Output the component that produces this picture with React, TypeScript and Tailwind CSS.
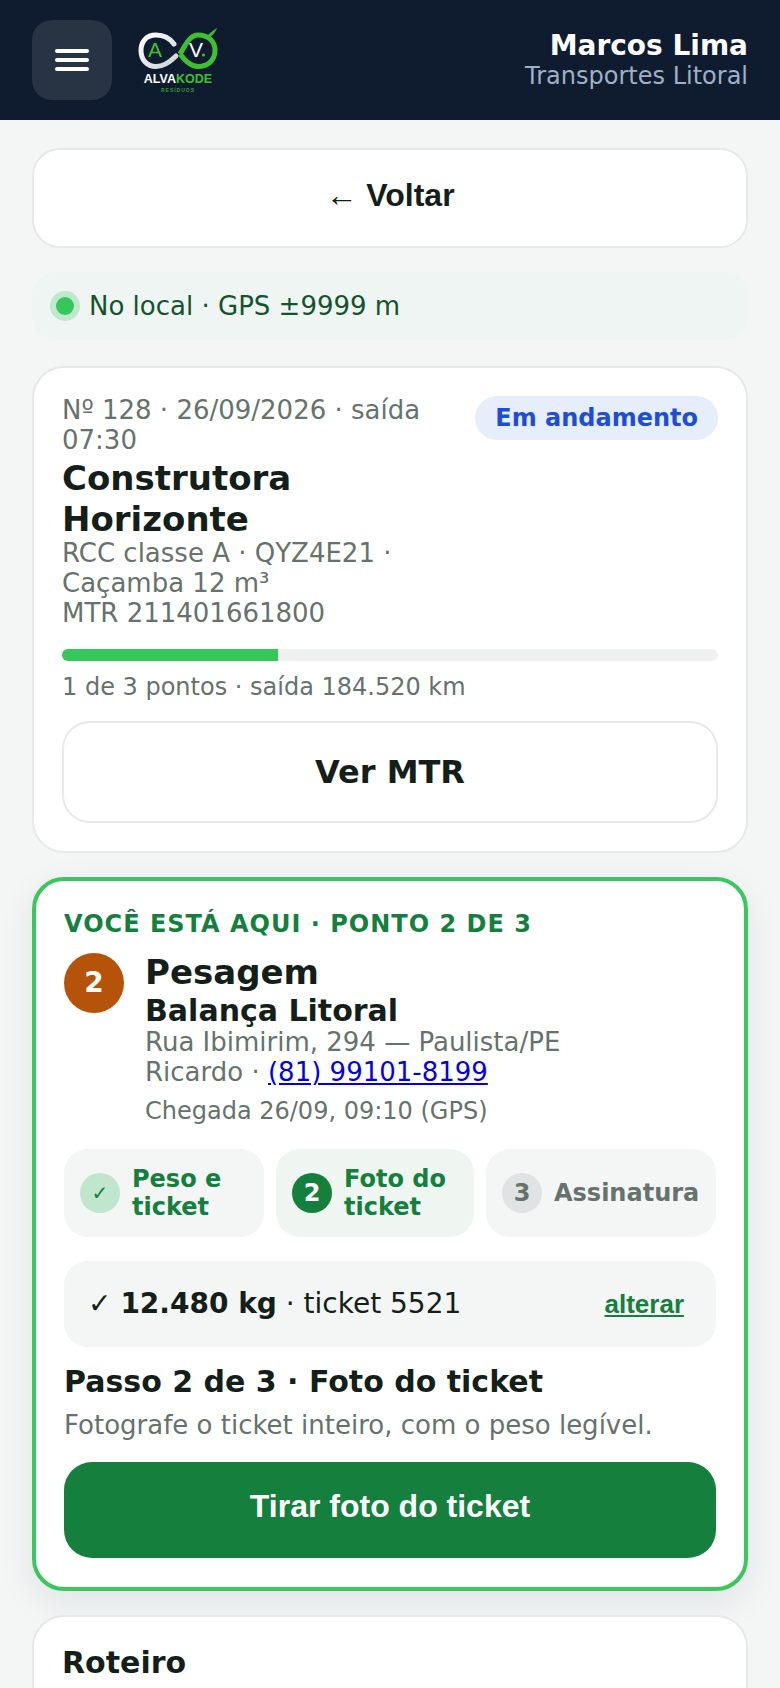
import React from "react";

function MenuIcon() {
  return (
    <svg width="34" height="24" viewBox="0 0 34 24" fill="none" stroke="white" strokeWidth="4" strokeLinecap="round">
      <line x1="2" y1="3" x2="32" y2="3" />
      <line x1="2" y1="12" x2="32" y2="12" />
      <line x1="2" y1="21" x2="32" y2="21" />
    </svg>
  );
}

function Logo() {
  return (
    <div className="flex flex-col items-center w-[84px] leading-none">
      <svg width="84" height="44" viewBox="0 0 84 44" fill="none">
        <defs>
          <linearGradient id="silver" x1="0" y1="0" x2="1" y2="1">
            <stop offset="0" stopColor="#ffffff" />
            <stop offset="1" stopColor="#cdd3d9" />
          </linearGradient>
        </defs>
        {/* left loop */}
        <path d="M38 17 C33 10 27 8 20 8 C10 8 5 15 5 23.5 C5 33 11 39.5 20 39.5 C28 39.5 34 35 40 29" stroke="url(#silver)" strokeWidth="5" strokeLinecap="round" />
        {/* right loop */}
        <path d="M44 27 C50 17 54 8 62 8 C72 8 79 14 79 23.5 C79 33 72 39.5 62 39.5 C54 39.5 49 33 44 27" stroke="#3fc02f" strokeWidth="5" strokeLinejoin="round" />
        {/* leaf */}
        <path d="M72 8 C75 5 78 3 81 1 C80 4 78 7 74 10 Z" fill="#3fc02f" />
        <text x="19" y="30" textAnchor="middle" fontFamily="Liberation Sans, sans-serif" fontSize="21" fill="#3fc02f">A</text>
        <text x="60" y="30" textAnchor="middle" fontFamily="Liberation Sans, sans-serif" fontSize="21" fill="#ffffff">V</text>
        <circle cx="67.5" cy="28" r="1.6" fill="#3fc02f" />
      </svg>
      <div className="font-['Liberation_Sans',sans-serif] font-bold text-[12.5px] mt-[2px] text-white">
        ALVA<span className="text-[#3fc02f]">KODE</span>
      </div>
      <div className="font-['Liberation_Sans',sans-serif] font-bold text-[5px] tracking-[1px] text-[#3a9a3a] mt-[2px]">RESÍDUOS</div>
    </div>
  );
}

function StepChip({ n, label, bubble, text, width, bg }: { n: string; label: string; bubble: string; text: string; width: string; bg: string }) {
  return (
    <div className={`${width} ${bg} h-[88px] shrink-0 rounded-[24px] pl-4 pr-3 flex items-center gap-3`}>
      <div className={`${bubble} w-10 h-10 rounded-full shrink-0 flex items-center justify-center text-[24px] font-bold`}>{n}</div>
      <div className={`${text} text-[24px] leading-[28px] font-bold`}>{label}</div>
    </div>
  );
}

export default function App() {
  return (
    <div className="h-[1688px] overflow-hidden bg-[#f3f6f5] font-['DejaVu_Sans',sans-serif] text-[#141f1a]">
      {/* Header */}
      <header className="h-[120px] bg-[#0f1b2e] px-8 flex items-center justify-between">
        <div className="flex items-center gap-6">
          <button className="w-20 h-20 rounded-[20px] bg-[#283444] flex items-center justify-center">
            <MenuIcon />
          </button>
          <Logo />
        </div>
        <div className="text-right -mt-[1px]">
          <div className="text-[28px] leading-[32px] font-bold text-white">Marcos Lima</div>
          <div className="text-[24px] leading-[28px] text-[#9fb0c6]">Transportes Litoral</div>
        </div>
      </header>

      <main className="px-8 pt-7 flex flex-col">
        <button className="h-[100px] pb-[6px] rounded-[28px] bg-white border-2 border-[#e6e9e8] font-['Liberation_Sans',sans-serif] font-bold text-[32px] flex items-center justify-center">
          <span>← Voltar</span>
        </button>

        {/* GPS status */}
        <div className="mt-6 h-[68px] rounded-[24px] bg-[#eff5f2] px-[23px] flex items-center gap-[11px] text-[26px] text-[#14532d]">
          <span className="w-[18px] h-[18px] rounded-full bg-[#34c759] ring-[6px] ring-[#bfe8cc] shrink-0 ml-[1px]" />
          <span className="ml-1">No local · GPS ±9999 m</span>
        </div>

        {/* Trip card */}
        <section className="mt-[26px] rounded-[32px] bg-white border-2 border-[#e6e9e8] px-7 pt-7 pb-7">
          <div className="flex items-start justify-between gap-3">
            <div className="w-[370px]">
              <div className="text-[26px] leading-[30px] text-[#66726c] -mt-[1px]">Nº 128 · 26/09/2026 · saída 07:30</div>
              <div className="text-[34px] leading-[41px] font-bold mt-[3px]">Construtora Horizonte</div>
              <div className="text-[26px] leading-[30px] text-[#66726c] -mt-[2px]">
                RCC classe A · QYZ4E21 · Caçamba 12 m³
                <br />
                MTR 211401661800
              </div>
            </div>
            <span className="h-11 px-5 rounded-full bg-[#e6edfb] text-[#1d4ed8] text-[24px] font-bold flex items-center shrink-0">Em andamento</span>
          </div>
          <div className="mt-[21px] h-3 rounded-full bg-[#eef1ef] overflow-hidden">
            <div className="h-full w-[33%] bg-[#34c759]" />
          </div>
          <div className="mt-3 text-[24px] leading-[28px] text-[#66726c]">1 de 3 pontos · saída 184.520 km</div>
          <button className="mt-5 w-full h-[102px] rounded-[28px] bg-white border-2 border-[#e6e9e8] text-[32px] font-bold">Ver MTR</button>
        </section>

        {/* Current stop */}
        <section className="mt-6 rounded-[32px] bg-white border-4 border-[#3cc65f] px-7 pt-[29px] pb-[29px] shadow-[0_12px_36px_rgba(15,27,46,0.08)]">
          <div className="text-[24px] leading-[28px] font-bold tracking-[1px] text-[#15803d]">VOCÊ ESTÁ AQUI · PONTO 2 DE 3</div>
          <div className="mt-[15px] flex items-start gap-[21px]">
            <div className="w-[60px] h-[60px] rounded-full bg-[#b45309] text-white text-[28px] font-bold flex items-center justify-center shrink-0">2</div>
            <div>
              <div className="text-[34px] leading-[41px] font-bold -mt-[1px]">Pesagem</div>
              <div className="text-[30px] leading-[36px] font-bold">Balança Litoral</div>
              <div className="text-[26px] leading-[30px] text-[#66726c] -mt-[2px]">Rua Ibimirim, 294 — Paulista/PE</div>
              <div className="text-[26px] leading-[30px] text-[#66726c]">
                Ricardo · <a href="#" className="text-[#0000ee] underline">(81) 99101-8199</a>
              </div>
              <div className="mt-[9px] text-[24px] leading-[30px] text-[#66726c]">Chegada 26/09, 09:10 (GPS)</div>
            </div>
          </div>

          <div className="mt-[23px] flex gap-3">
            <StepChip n="✓" label="Peso e ticket" width="w-[200px]" bg="bg-[#f3f6f5]" bubble="bg-[#c0e6cd] text-[#15803d] !font-normal !text-[20px]" text="text-[#15803d]" />
            <StepChip n="2" label="Foto do ticket" width="w-[198px]" bg="bg-[#eff5f1]" bubble="bg-[#15803d] text-white" text="text-[#15803d]" />
            <StepChip n="3" label="Assinatura" width="w-[230px]" bg="bg-[#f3f6f5]" bubble="bg-[#e0e3e3] text-[#66726c]" text="text-[#66726c]" />
          </div>

          <div className="mt-6 h-[86px] rounded-[24px] bg-[#f3f6f5] pl-6 pr-8 flex items-center justify-between">
            <div className="text-[28px] leading-[34px]">
              ✓ <b className="font-bold">12.480 kg</b> · ticket 5521
            </div>
            <a href="#" className="font-['Liberation_Sans',sans-serif] font-bold text-[26px] text-[#15803d] underline">alterar</a>
          </div>

          <div className="mt-[17px] text-[30px] leading-[36px] font-bold">Passo 2 de 3 · Foto do ticket</div>
          <div className="mt-[7px] text-[26px] leading-[36px] text-[#66726c]">Fotografe o ticket inteiro, com o peso legível.</div>
          <button className="mt-[19px] w-full h-24 rounded-[28px] bg-[#15803d] text-white font-['Liberation_Sans',sans-serif] font-bold text-[32px] pb-[8px]">Tirar foto do ticket</button>
        </section>

        {/* Route */}
        <section className="mt-[24px] rounded-[32px] bg-white border-2 border-[#e6e9e8] p-7 h-[200px]">
          <div className="text-[30px] leading-[36px] font-bold">Roteiro</div>
        </section>
      </main>
    </div>
  );
}
